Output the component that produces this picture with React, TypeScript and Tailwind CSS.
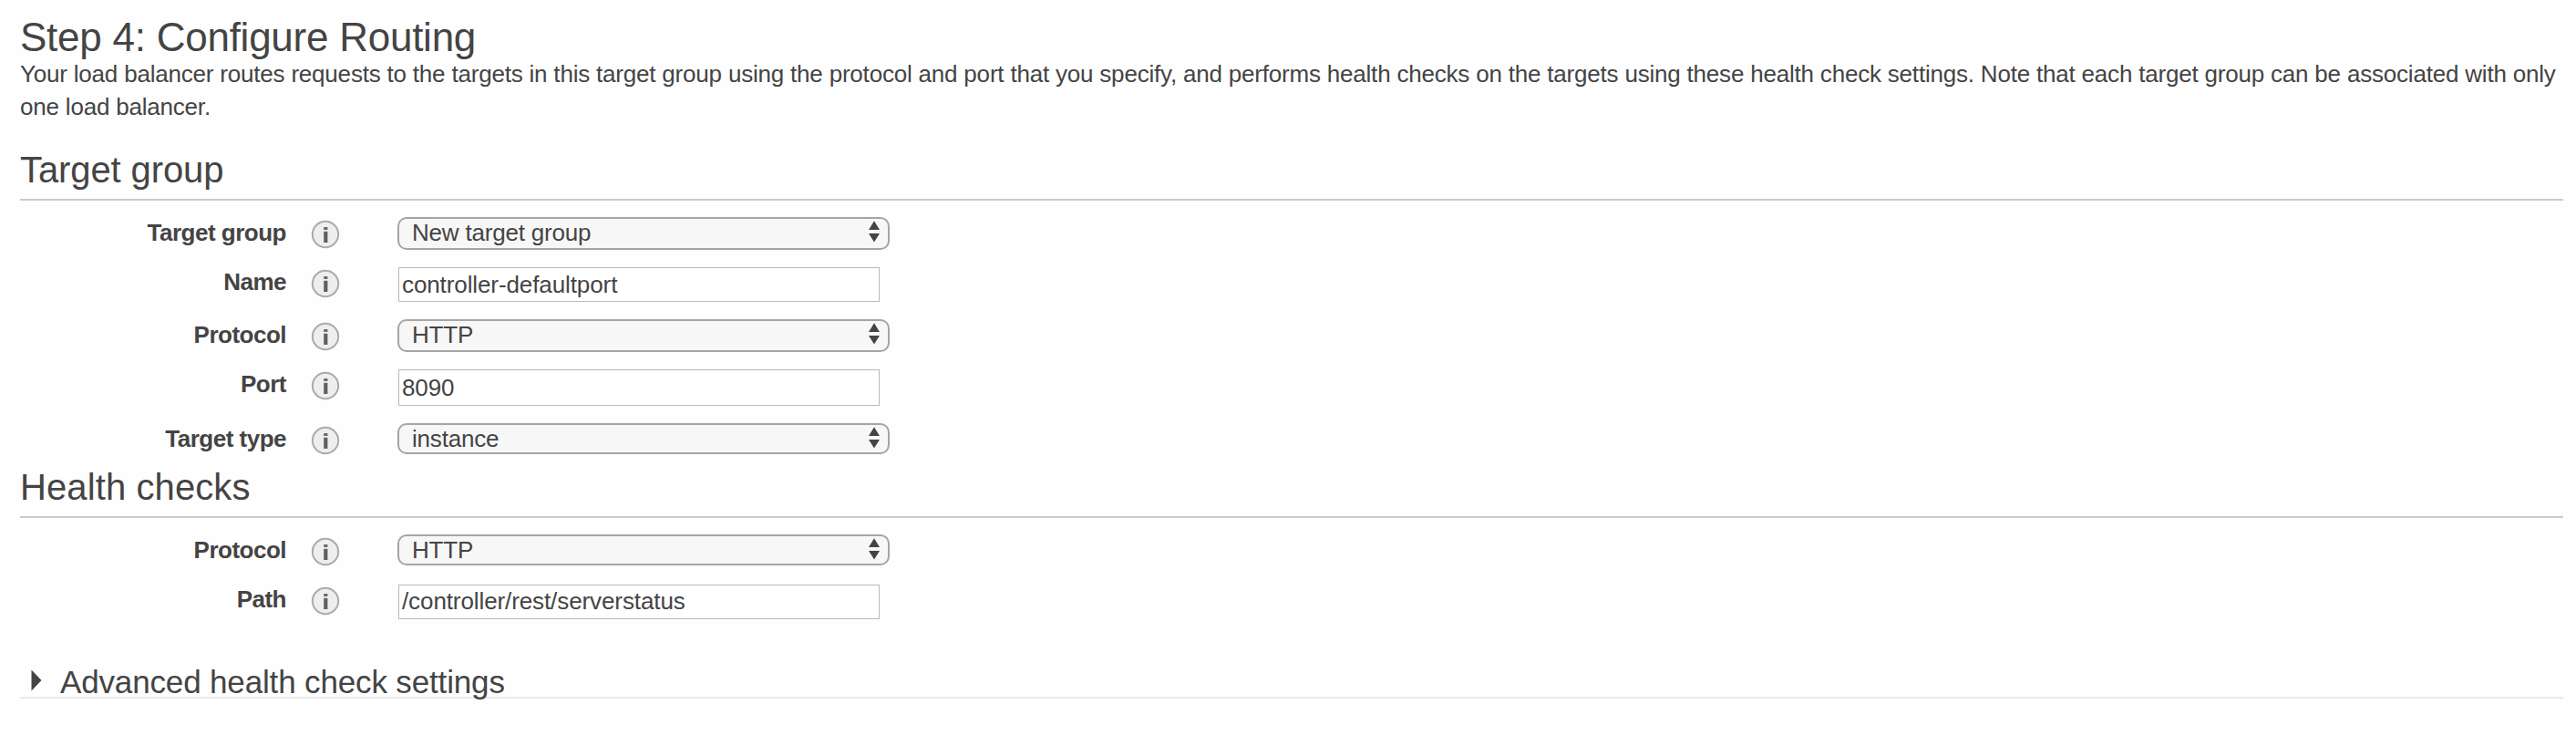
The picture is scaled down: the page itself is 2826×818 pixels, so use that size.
import type { ReactNode } from "react";

function InfoIcon() {
  return (
    <svg width="32" height="32" viewBox="0 0 32 32" className="mt-1 shrink-0" aria-hidden="true">
      <circle cx="16" cy="16" r="14.2" fill="#eeeeee" stroke="#ababab" strokeWidth="2" />
      <rect x="14.2" y="8" width="4.2" height="3" fill="#6a6a6a" />
      <rect x="14.2" y="12.8" width="4.2" height="12.2" fill="#606060" />
    </svg>
  );
}

function Row({ label, className, children }: { label: string; className: string; children: ReactNode }) {
  return (
    <div className={`flex items-start ${className}`}>
      <label className="w-[292px] shrink-0 text-right text-[26px] leading-9 font-bold tracking-[-0.5px]">{label}</label>
      <div className="w-[122px] shrink-0 pl-[27px]">
        <InfoIcon />
      </div>
      {children}
    </div>
  );
}

function Select({ value, className }: { value: string; className: string }) {
  return (
    <button
      type="button"
      className={`mt-px flex w-[540px] items-start justify-between rounded-[10px] border-2 border-[#a5a5a5] bg-[#f7f7f7] pr-[9px] pl-[14px] text-[26px] tracking-[-0.2px] ${className}`}
    >
      <span className="-mt-[3px] leading-9">{value}</span>
      <svg width="12" height="24" viewBox="0 0 12 24" className="mt-[2px]" fill="#444444" aria-hidden="true">
        <path d="M6 0.3 L12 10 H0 Z M0 14 H12 L6 23.5 Z" />
      </svg>
    </button>
  );
}

function TextInput({ value, className }: { value: string; className: string }) {
  return (
    <input
      readOnly
      value={value}
      className={`mt-[2px] ml-px w-[528px] border border-[#b9b9b9] bg-white px-[3px] text-[26px] tracking-[-0.1px] outline-none ${className}`}
    />
  );
}

export default function App() {
  return (
    <main className="min-h-[818px] bg-[#fefefe] pt-[18px] pr-[14px] pl-[22px] font-['Liberation_Sans',Arial,sans-serif] text-[#444444]">
      <h1 className="h-[46px] text-[44px] leading-[46px] tracking-[-0.25px]">Step 4: Configure Routing</h1>
      <p className="-mt-px text-[26px] leading-9 tracking-[-0.2px]">
        Your load balancer routes requests to the targets in this target group using the protocol and port that you
        specify, and performs health checks on the targets using these health check settings. Note that each target
        group can be associated with only one load balancer.
      </p>

      <h2 className="mt-[27px] border-b-2 border-[#cacaca] pb-2 text-[40px] leading-[48px] tracking-[-0.1px]">Target group</h2>
      <section className="pt-[17px]">
        <Row label="Target group" className="h-[54px]">
          <Select value="New target group" className="h-9" />
        </Row>
        <Row label="Name" className="h-[58px]">
          <TextInput value="controller-defaultport" className="h-[38px]" />
        </Row>
        <Row label="Protocol" className="h-[54px]">
          <Select value="HTTP" className="h-9" />
        </Row>
        <Row label="Port" className="h-[60px]">
          <TextInput value="8090" className="h-10" />
        </Row>
        <Row label="Target type" className="h-[47px]">
          <Select value="instance" className="h-[34px]" />
        </Row>
      </section>

      <h2 className="border-b-2 border-[#cacaca] pb-2 text-[40px] leading-[48px] tracking-[0.1px]">Health checks</h2>
      <section className="pt-[17px]">
        <Row label="Protocol" className="h-[54px]">
          <Select value="HTTP" className="h-[34px]" />
        </Row>
        <Row label="Path" className="h-[89px]">
          <TextInput value="/controller/rest/serverstatus" className="h-[38px] pb-[2px]" />
        </Row>
      </section>

      <div className="flex h-[38px] items-start border-b-2 border-[#ebebeb] pl-3">
        <svg width="12" height="24" viewBox="0 0 12 24" className="mt-[6px] shrink-0" fill="#444444" aria-hidden="true">
          <path d="M0.5 0.5 L11.5 12 L0.5 23.5 Z" />
        </svg>
        <h3 className="ml-5 text-[35px] leading-10 tracking-[-0.15px]">Advanced health check settings</h3>
      </div>
    </main>
  );
}
